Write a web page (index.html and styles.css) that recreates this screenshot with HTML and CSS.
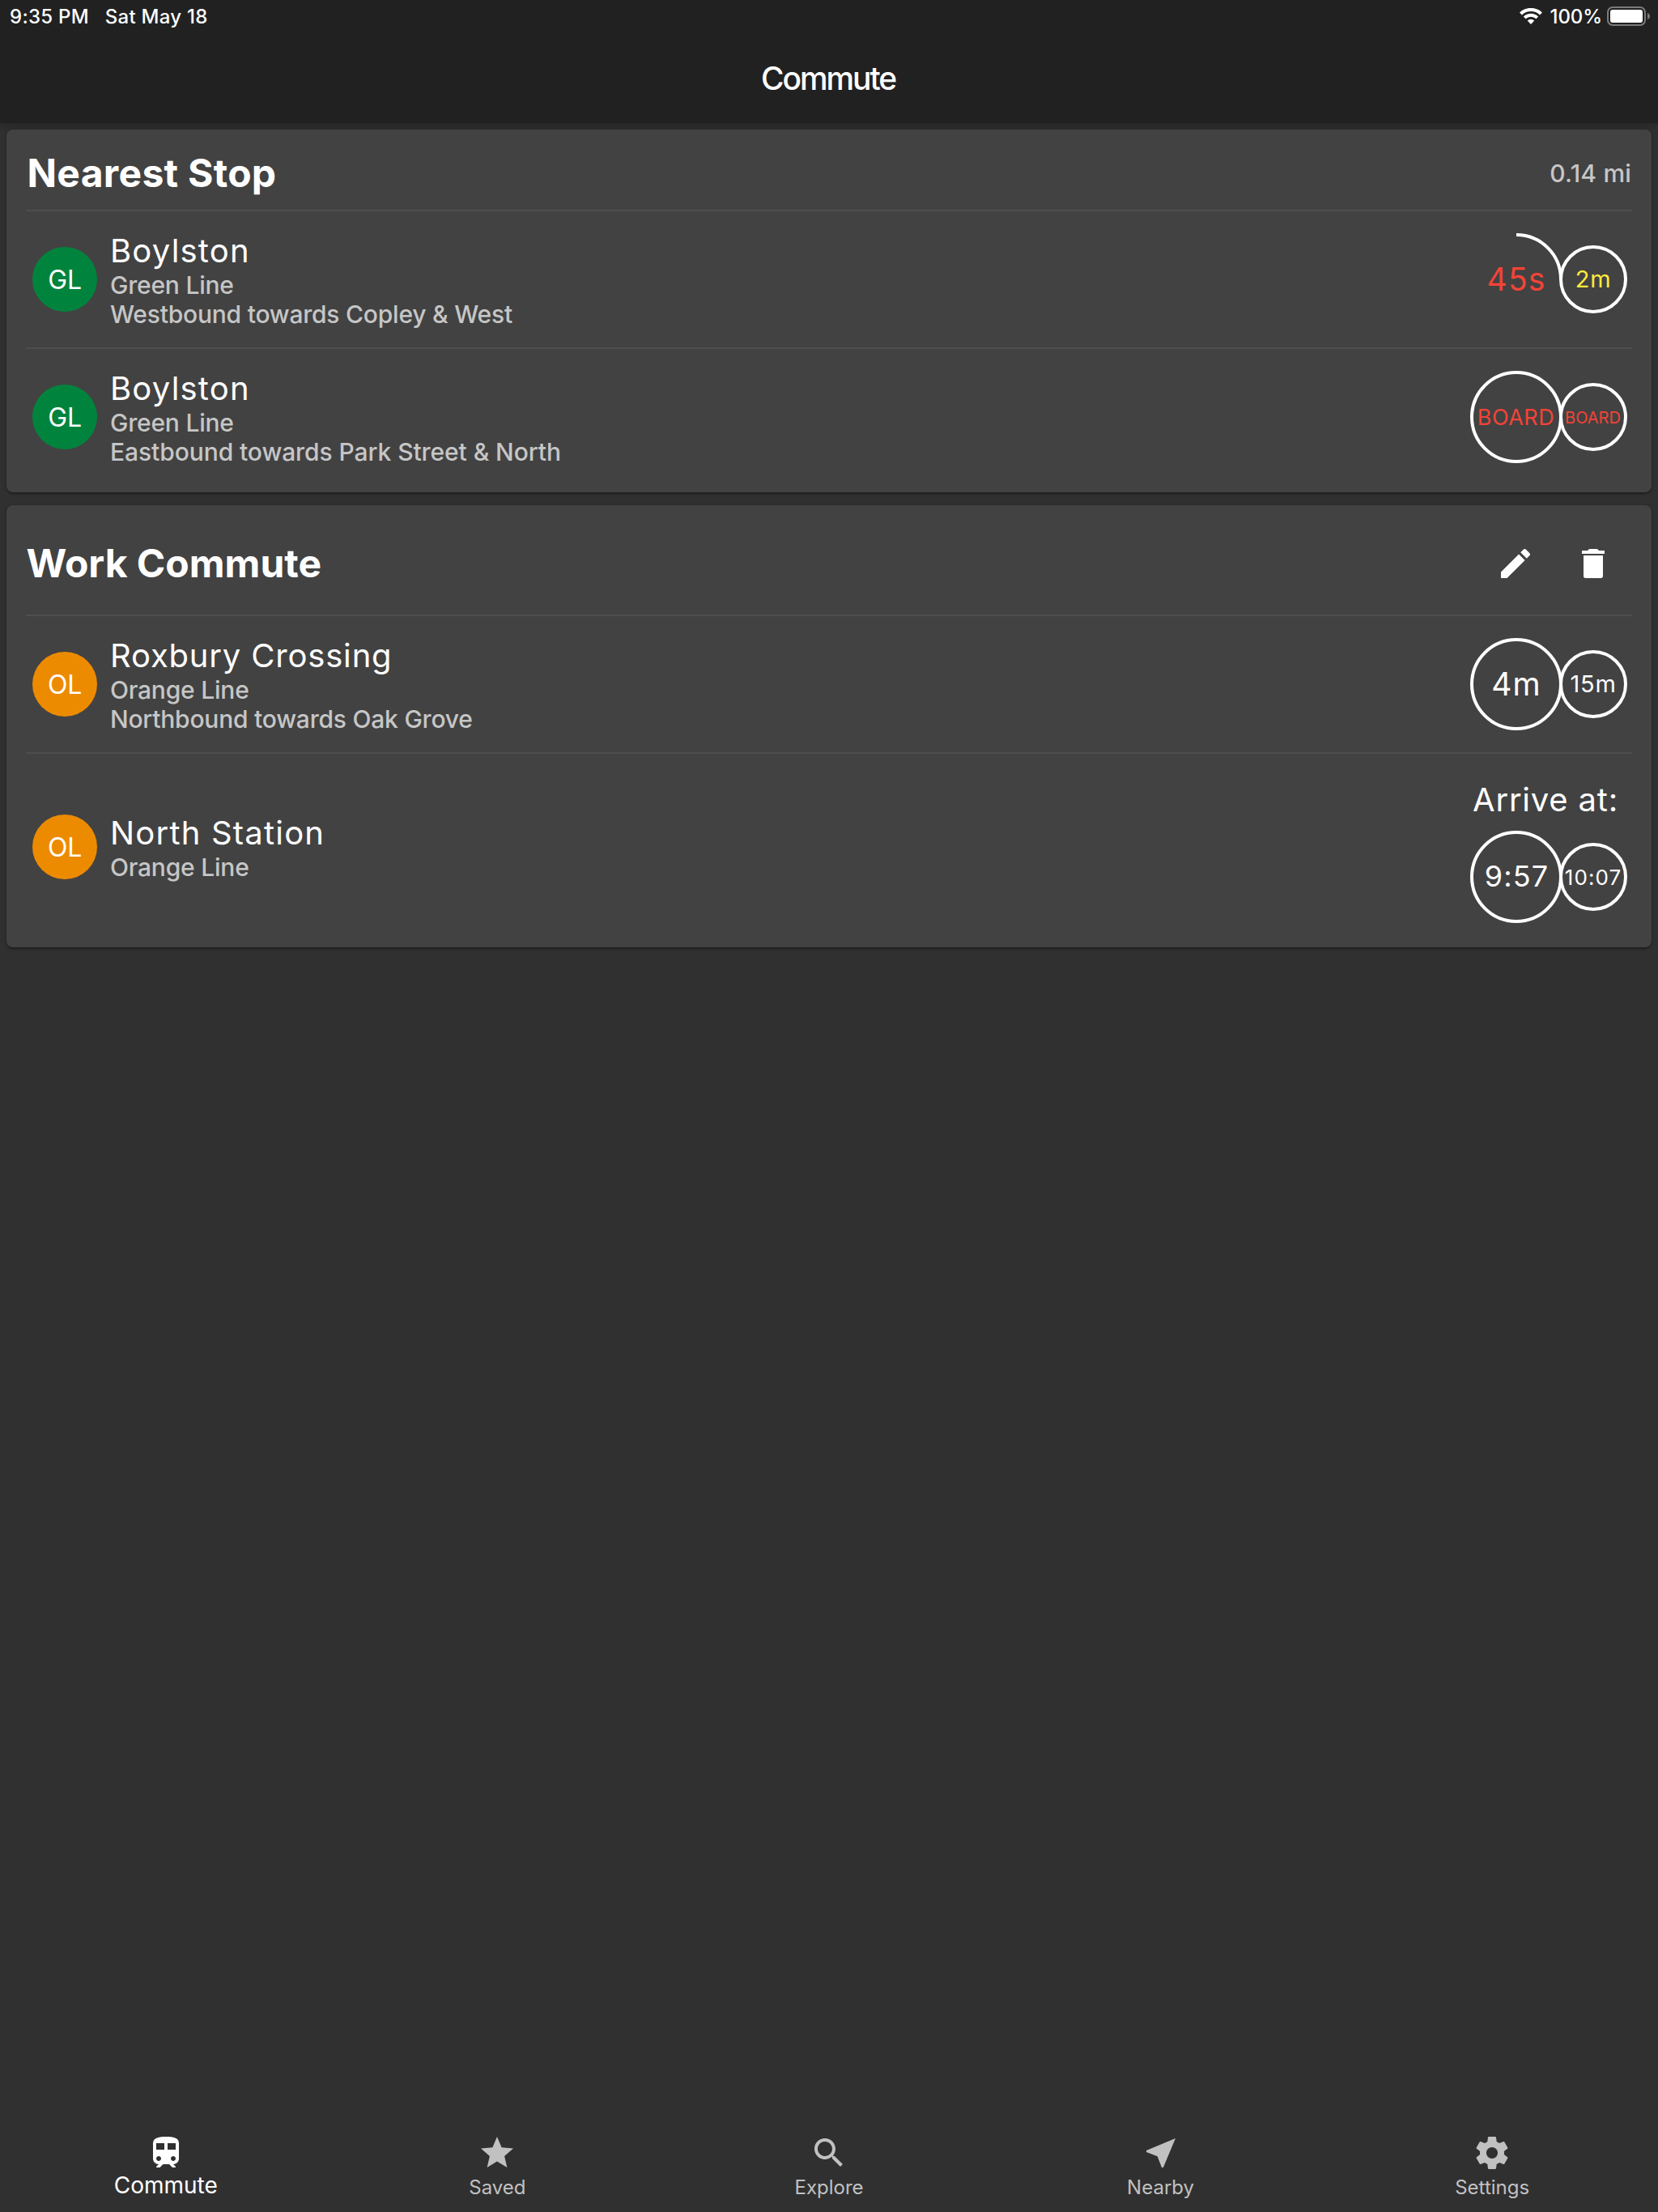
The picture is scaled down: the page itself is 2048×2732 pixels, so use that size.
FILE: index.html
```html
<!DOCTYPE html>
<html lang="en">
<head>
<meta charset="utf-8">
<title>Commute</title>
<link rel="stylesheet" href="styles.css">
</head>
<body>
<div class="app">
  <header class="app-bar">
    <div class="status-bar">
      <span class="status-time">9:35 PM</span>
      <span class="status-date">Sat May 18</span>
      <svg class="wifi" viewBox="0 0 28 20" width="28" height="20" fill="none" stroke="#fff">
        <path d="M1.5 7A18 18 0 0 1 26.5 7" stroke-width="4.2"/>
        <path d="M6.2 11.9A11.2 11.2 0 0 1 21.8 11.9" stroke-width="3.8"/>
        <path d="M14 20L9.7 15.6A6.2 6.2 0 0 1 18.3 15.6Z" fill="#fff" stroke="none"/>
      </svg>
      <span class="status-battery">100%</span>
      <svg class="battery" viewBox="0 0 53 24" width="53" height="24">
        <rect x="1" y="1" width="46" height="22" rx="6" fill="none" stroke="#7a7a7a" stroke-width="2"/>
        <rect x="4" y="4" width="40" height="16" rx="3" fill="#fff"/>
        <path d="M50 8C52 8.8 53 10 53 12S52 15.2 50 16Z" fill="#7a7a7a"/>
      </svg>
    </div>
    <h1 class="title">Commute</h1>
  </header>

  <main class="content">
    <section class="card">
      <div class="card-header">
        <h2 class="card-title card-title-wide">Nearest Stop</h2>
        <span class="distance">0.14 mi</span>
      </div>
      <div class="row">
        <div class="avatar green">GL</div>
        <div class="stop">
          <div class="stop-name">Boylston</div>
          <div class="stop-sub">Green Line</div>
          <div class="stop-sub">Westbound towards Copley &amp; West</div>
        </div>
        <div class="rings">
          <div class="ring large"><svg viewBox="0 0 110 110"><path d="M55 0A55 55 0 0 1 110 55"/></svg><span class="t39 red">45s</span></div>
          <div class="ring small"><svg viewBox="0 0 80 80"><circle cx="40" cy="40" r="40"/></svg><span class="t29 yellow">2m</span></div>
        </div>
      </div>
      <div class="row">
        <div class="avatar green">GL</div>
        <div class="stop">
          <div class="stop-name">Boylston</div>
          <div class="stop-sub">Green Line</div>
          <div class="stop-sub sub-even">Eastbound towards Park Street &amp; North</div>
        </div>
        <div class="rings">
          <div class="ring large"><svg viewBox="0 0 110 110"><circle cx="55" cy="55" r="55"/></svg><span class="t27 red">BOARD</span></div>
          <div class="ring small"><svg viewBox="0 0 80 80"><circle cx="40" cy="40" r="40"/></svg><span class="t20 red">BOARD</span></div>
        </div>
      </div>
    </section>

    <section class="card">
      <div class="card-header tall">
        <h2 class="card-title">Work Commute</h2>
        <div class="actions">
          <span class="icon-button"><svg viewBox="0 0 24 24"><path d="M3 17.25V21h3.75L17.81 9.94l-3.75-3.75L3 17.25zM20.71 7.04c.39-.39.39-1.02 0-1.41l-2.34-2.34c-.39-.39-1.02-.39-1.41 0l-1.83 1.83 3.75 3.75 1.83-1.83z"/></svg></span>
          <span class="icon-button"><svg viewBox="0 0 24 24"><path d="M6 19.9c0 .6.5 1.1 1.1 1.1h9.8c.6 0 1.1-.5 1.1-1.1V7H6v12.9zM19 4h-3.5l-.7-.7c-.2-.2-.4-.3-.7-.3H9.9c-.3 0-.5.1-.7.3L8.500 4H5v2h14V4z"/></svg></span>
        </div>
      </div>
      <div class="row">
        <div class="avatar orange">OL</div>
        <div class="stop">
          <div class="stop-name name-long">Roxbury Crossing</div>
          <div class="stop-sub">Orange Line</div>
          <div class="stop-sub">Northbound towards Oak Grove</div>
        </div>
        <div class="rings">
          <div class="ring large"><svg viewBox="0 0 110 110"><circle cx="55" cy="55" r="55"/></svg><span class="t39">4m</span></div>
          <div class="ring small"><svg viewBox="0 0 80 80"><circle cx="40" cy="40" r="40"/></svg><span class="t29">15m</span></div>
        </div>
      </div>
      <div class="row arrival">
        <div class="avatar orange">OL</div>
        <div class="stop">
          <div class="stop-name">North Station</div>
          <div class="stop-sub">Orange Line</div>
        </div>
        <div class="arrive">
          <div class="arrive-label">Arrive at:</div>
          <div class="rings">
            <div class="ring large"><svg viewBox="0 0 110 110"><circle cx="55" cy="55" r="55"/></svg><span class="t36">9:57</span></div>
            <div class="ring small"><svg viewBox="0 0 80 80"><circle cx="40" cy="40" r="40"/></svg><span class="t26">10:07</span></div>
          </div>
        </div>
      </div>
    </section>
  </main>

  <nav class="tabs">
    <a class="tab active">
      <svg viewBox="0 0 24 24"><path d="M12 2c-4 0-8 .5-8 4v9.500C4 17.430 5.570 19 7.500 19L6 20.500v.5h2.230l2-2H14l2 2h2v-.5L16.500 19c1.930 0 3.500-1.570 3.500-3.500V6c0-3.500-3.580-4-8-4zM7.500 17c-.83 0-1.500-.67-1.500-1.500S6.670 14 7.500 14s1.500.67 1.500 1.500S8.330 17 7.500 17zm3.500-7H6V6h5v4zm2 0V6h5v4h-5zm3.500 7c-.83 0-1.500-.67-1.500-1.500s.67-1.500 1.500-1.500 1.500.67 1.500 1.500-.67 1.500-1.500 1.500z"/></svg>
      <span>Commute</span>
    </a>
    <a class="tab">
      <svg viewBox="0 0 24 24"><path d="M12 17.270L18.180 21l-1.640-7.030L22 9.240l-7.190-.61L12 2 9.190 8.630 2 9.240l5.460 4.730L5.820 21z"/></svg>
      <span>Saved</span>
    </a>
    <a class="tab">
      <svg viewBox="0 0 24 24"><path d="M15.500 14h-.79l-.28-.27C15.410 12.590 16 11.110 16 9.500 16 5.910 13.090 3 9.500 3S3 5.910 3 9.500 5.910 16 9.500 16c1.610 0 3.090-.59 4.230-1.570l.27.28v.79l5 4.990L20.490 19l-4.990-5zm-6 0C7.010 14 5 11.990 5 9.500S7.010 5 9.500 5 14 7.010 14 9.500 11.990 14 9.500 14z"/></svg>
      <span>Explore</span>
    </a>
    <a class="tab">
      <svg viewBox="0 0 24 24"><path d="M21 3L3 10.530v.98l6.840 2.650L12.480 21h.98L21 3z"/></svg>
      <span>Nearby</span>
    </a>
    <a class="tab">
      <svg viewBox="0 0 24 24"><path d="M19.430 12.980c.04-.32.07-.64.07-.98s-.03-.66-.07-.98l2.110-1.650c.19-.15.24-.42.12-.64l-2-3.460c-.12-.22-.39-.3-.61-.22l-2.490 1c-.52-.4-1.080-.73-1.690-.98l-.38-2.650C14.460 2.180 14.250 2 14 2h-4c-.25 0-.46.18-.49.42l-.38 2.650c-.61.25-1.170.59-1.690.98l-2.490-1c-.23-.09-.49 0-.61.22l-2 3.460c-.13.22-.07.49.12.64l2.110 1.650c-.04.32-.07.65-.07.98s.03.66.07.98l-2.110 1.650c-.19.15-.24.42-.12.64l2 3.460c.12.22.39.3.61.22l2.490-1c.52.4 1.080.73 1.690.98l.38 2.650c.03.24.24.42.49.42h4c.25 0 .46-.18.49-.42l.38-2.650c.61-.25 1.170-.59 1.690-.98l2.490 1c.23.09.49 0 .61-.22l2-3.460c.12-.22.07-.49-.12-.64l-2.110-1.650zM12 15.500c-1.930 0-3.500-1.570-3.500-3.500s1.570-3.500 3.500-3.500 3.500 1.570 3.500 3.500-1.570 3.500-3.500 3.500z"/></svg>
      <span>Settings</span>
    </a>
  </nav>
</div>
</body>
</html>
```
FILE: styles.css
```css
* { box-sizing: border-box; }

body {
  margin: 0;
  background: #303030;
  color: #fff;
  font-family: Inter, "Liberation Sans", sans-serif;
}

.app {
  display: flex;
  flex-direction: column;
  height: 2732px;
}

/* App bar */
.app-bar {
  height: 152px;
  background: #212121;
  box-shadow: 0 4px 8px rgba(0, 0, 0, .22);
}

.status-bar {
  display: flex;
  align-items: center;
  height: 40px;
  padding: 0 10px 0 12px;
  font-size: 24px;
  font-weight: 500;
  letter-spacing: .26px;
}

.status-date { margin-left: 20px; }
.wifi { margin-left: auto; }
.status-battery { margin: 0 6px 0 9.5px; letter-spacing: -.1px; }

.title {
  margin: 0;
  height: 112px;
  padding-right: 2px;
  line-height: 113px;
  text-align: center;
  font-size: 39px;
  font-weight: 500;
  letter-spacing: -2.1px;
}

/* Cards */
.content {
  flex: 1;
  display: flex;
  flex-direction: column;
  gap: 16px;
  padding: 8px;
}

.card {
  padding: 8px 24px;
  background: #424242;
  border-radius: 8px;
  box-shadow: 0 3px 2px -1px rgba(0, 0, 0, .2), 0 1px 4px rgba(0, 0, 0, .3);
}

.card-header {
  display: flex;
  align-items: center;
  justify-content: space-between;
  height: 92px;
}

.card-header.tall { height: 128px; }

.card-title {
  margin: 0;
  padding-left: .5px;
  font-size: 48px;
  font-weight: 700;
  line-height: 60px;
}

.card-title-wide {
  padding-left: 1.5px;
  letter-spacing: .28px;
}

.distance {
  margin-right: 1px;
  color: #c6c6c6;
  font-size: 30px;
  font-weight: 500;
  letter-spacing: .2px;
}

.actions { display: flex; }

.icon-button {
  display: grid;
  place-items: center;
  width: 96px;
  height: 96px;
}

.icon-button svg {
  width: 48px;
  height: 48px;
  fill: #fff;
}

/* Stop rows */
.row {
  display: flex;
  align-items: center;
  height: 170px;
  padding: 0 8px;
}

/* Divider centred on the row's top edge, as wide as the row */
.row::before {
  content: "";
  align-self: flex-start;
  flex: none;
  width: 1984px;
  height: 2px;
  margin: -1px -1976px 0 -8px;
  background: #4e4e4e;
}

.row.arrival { height: 232px; }

.avatar {
  display: grid;
  place-items: center;
  flex: none;
  width: 80px;
  height: 80px;
  border-radius: 50%;
  font-size: 32px;
  letter-spacing: -.3px;
}

.green { background: #00843d; }
.orange { background: #ed8b00; }

.stop {
  flex: 1;
  margin-left: 16px;
  padding-top: 2px;
}

.stop-name {
  font-size: 40px;
  line-height: 48px;
  letter-spacing: 1.2px;
}

.name-long { letter-spacing: .82px; }

.stop-sub {
  color: #c6c6c6;
  font-size: 30px;
  font-weight: 500;
  line-height: 36px;
  letter-spacing: -.22px;
}

.sub-even { letter-spacing: -.08px; }

.arrive { padding-top: 10px; }

.arrive-label {
  margin: 0 0 16px 1px;
  font-size: 40px;
  line-height: 48px;
  letter-spacing: .8px;
}

/* Countdown rings */
.rings {
  display: flex;
  align-items: center;
}

.ring {
  display: grid;
  place-items: center;
}

.ring.large { width: 110px; height: 110px; }
.ring.small { width: 80px; height: 80px; }

.ring svg,
.ring span { grid-area: 1 / 1; }

.ring svg {
  width: 100%;
  height: 100%;
  overflow: visible;
  fill: none;
  stroke: #fff;
  stroke-width: 4px;
}

.ring span { white-space: nowrap; line-height: 1.2; }

.ring .t39 { font-size: 39px; letter-spacing: 1.1px; }
.ring .t36 { font-size: 36px; letter-spacing: 1.1px; padding-left: 1px; }
.ring .t29 { font-size: 29px; letter-spacing: .8px; }
.ring .t27 { font-size: 27px; letter-spacing: .5px; padding: 2px 1px 0 0; }
.ring .t26 { font-size: 26px; letter-spacing: 1.1px; padding-top: 1px; }
.ring .t20 { font-size: 20px; padding: 2px 1px 0 0; }
.red { color: #f44336; }
.yellow { color: #ffeb3b; }

/* Bottom tabs */
.tabs {
  display: flex;
  height: 112px;
  padding-top: 15px;
  background: #303030;
}

.tab {
  display: flex;
  flex: 1;
  flex-direction: column;
  align-items: center;
  color: #c1c1c1;
  font-size: 24px;
  line-height: 38px;
}

.tab.active {
  color: #fff;
  font-size: 28px;
  line-height: 33px;
}

.tab svg {
  width: 48px;
  height: 48px;
  fill: currentColor;
}
```
